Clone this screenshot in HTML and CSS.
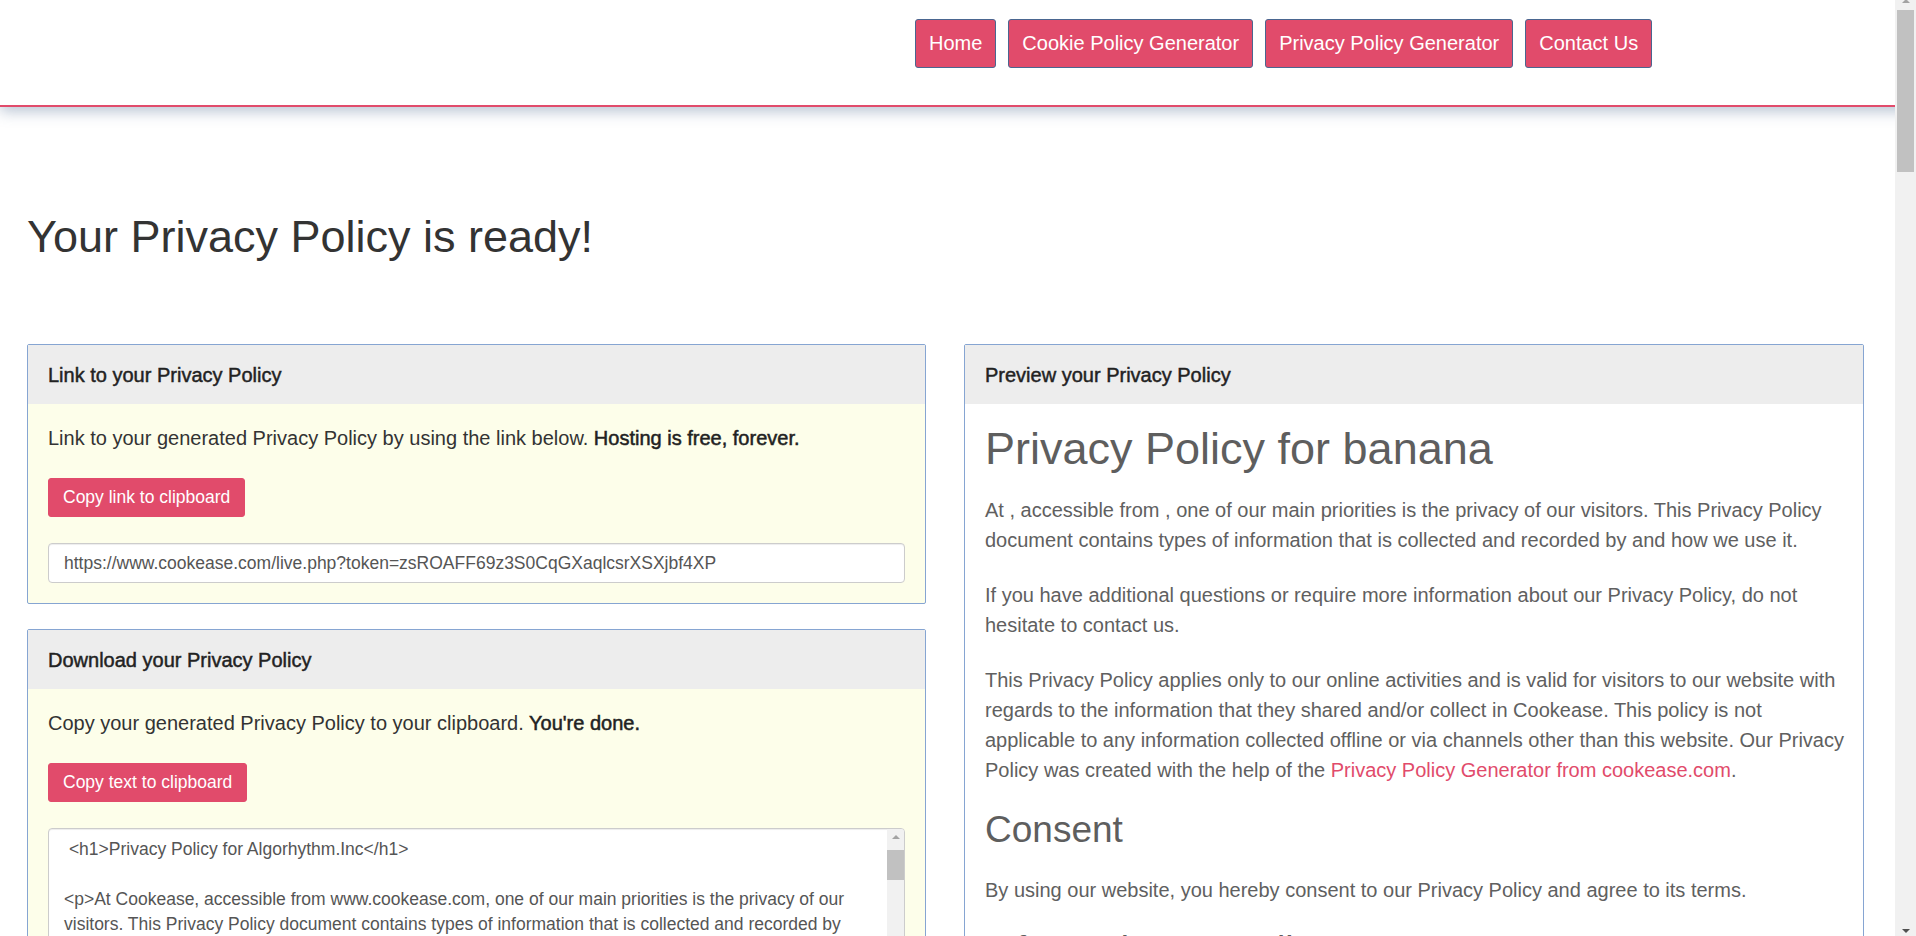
FILE: index.html
```html
<!DOCTYPE html>
<html lang="en">
<head>
<meta charset="utf-8">
<title>Your Privacy Policy is ready! - Cookease</title>
<link rel="stylesheet" href="styles.css">
</head>
<body>
<header class="topbar">
  <nav class="nav">
    <a class="nav-btn" href="#">Home</a>
    <a class="nav-btn" href="#">Cookie Policy Generator</a>
    <a class="nav-btn" href="#">Privacy Policy Generator</a>
    <a class="nav-btn" href="#">Contact Us</a>
  </nav>
</header>

<main class="page">
  <h1 class="page-title">Your Privacy Policy is ready!</h1>

  <div class="columns">
    <div class="col">
      <section class="panel">
        <div class="panel-heading">Link to your Privacy Policy</div>
        <div class="panel-body">
          <p class="lead">Link to your generated Privacy Policy by using the link below. <strong>Hosting is free, forever.</strong></p>
          <button class="btn" type="button">Copy link to clipboard</button>
          <input class="field" type="text" value="https://www.cookease.com/live.php?token=zsROAFF69z3S0CqGXaqlcsrXSXjbf4XP" readonly>
        </div>
      </section>

      <section class="panel">
        <div class="panel-heading">Download your Privacy Policy</div>
        <div class="panel-body">
          <p class="lead">Copy your generated Privacy Policy to your clipboard. <strong>You're done.</strong></p>
          <button class="btn" type="button">Copy text to clipboard</button>
          <div class="code-wrap">
            <textarea class="field code" readonly> &lt;h1&gt;Privacy Policy for Algorhythm.Inc&lt;/h1&gt;

&lt;p&gt;At Cookease, accessible from www.cookease.com, one of our main priorities is the privacy of our visitors. This Privacy Policy document contains types of information that is collected and recorded by Cookease and how we use it.&lt;/p&gt;

&lt;p&gt;If you have additional questions or require more information about our Privacy Policy, do not hesitate to contact us.&lt;/p&gt;

&lt;p&gt;This Privacy Policy applies only to our online activities and is valid for visitors to our website with regards to the information that they shared and/or collect in Cookease. This policy is not applicable to any information collected offline or via channels other than this website.&lt;/p&gt;

&lt;h2&gt;Consent&lt;/h2&gt;

&lt;p&gt;By using our website, you hereby consent to our Privacy Policy and agree to its terms.&lt;/p&gt;</textarea>
            <div class="fake-scroll code-scroll" aria-hidden="true">
              <span class="arrow up"></span>
              <span class="thumb"></span>
            </div>
          </div>
        </div>
      </section>
    </div>

    <div class="col">
      <section class="panel">
        <div class="panel-heading">Preview your Privacy Policy</div>
        <div class="panel-body preview">
          <h1>Privacy Policy for banana</h1>
          <p>At , accessible from , one of our main priorities is the privacy of our visitors. This Privacy Policy document contains types of information that is collected and recorded by and how we use it.</p>
          <p>If you have additional questions or require more information about our Privacy Policy, do not hesitate to contact us.</p>
          <p>This Privacy Policy applies only to our online activities and is valid for visitors to our website with regards to the information that they shared and/or collect in Cookease. This policy is not applicable to any information collected offline or via channels other than this website. Our Privacy Policy was created with the help of the <a href="#">Privacy Policy Generator from cookease.com</a>.</p>
          <h2>Consent</h2>
          <p>By using our website, you hereby consent to our Privacy Policy and agree to its terms.</p>
          <h2>Information we collect</h2>
          <p>The personal information that you are asked to provide, and the reasons why you are asked to provide it, will be made clear to you at the point we ask you to provide your personal information.</p>
        </div>
      </section>
    </div>
  </div>
</main>

<div class="fake-scroll page-scroll" aria-hidden="true">
  <span class="arrow up"></span>
  <span class="thumb"></span>
  <span class="arrow down"></span>
</div>
</body>
</html>
```

FILE: styles.css
```css
html, body {
  margin: 0;
  padding: 0;
}

body {
  font-family: "Liberation Sans", Arial, Helvetica, sans-serif;
  color: #333;
  background: #fff;
}

.topbar {
  height: 105px;
  background: #fff;
  border-bottom: 2px solid #e14b6b;
  box-shadow: 0 4px 14px rgba(70, 100, 140, 0.4);
  position: relative;
  z-index: 1;
}

.nav {
  display: flex;
  gap: 12px;
  padding: 19px 0 0 915px;
}

.nav-btn {
  display: block;
  padding: 10px 13px;
  font-size: 20px;
  line-height: 27px;
  color: #fff;
  text-decoration: none;
  background: #e14b6b;
  border: 1px solid #4a6690;
  border-radius: 3px;
  white-space: nowrap;
}

.page {
  padding: 0 0 40px 27px;
}

.page-title {
  margin: 0;
  padding: 105px 0 82px;
  font-size: 45px;
  line-height: 49.5px;
  font-weight: normal;
  color: #333;
}

.columns {
  display: grid;
  grid-template-columns: 899px 900px;
  column-gap: 38px;
  align-items: start;
}

.col {
  display: flex;
  flex-direction: column;
  gap: 25px;
}

.panel {
  border: 1px solid #86a5d2;
  border-radius: 2px;
  background: #fdfeea;
}

.panel-heading {
  background: #ededed;
  padding: 16px 20px 15px;
  font-size: 20px;
  line-height: 28px;
  color: #222;
  -webkit-text-stroke: 0.45px #222;
}

.panel-body {
  padding: 20px;
}

.lead {
  margin: 0 0 26px;
  font-size: 20px;
  line-height: 28px;
  color: #333;
}

.lead strong {
  font-weight: normal;
  color: #222;
  -webkit-text-stroke: 0.5px #222;
}

.btn {
  display: block;
  margin: 0 0 26px;
  padding: 6px 14px;
  font-family: inherit;
  font-size: 17.5px;
  line-height: 25px;
  color: #fff;
  background: #e14b6b;
  border: 1px solid #e14b6b;
  border-radius: 3px;
  cursor: pointer;
}

.field {
  display: block;
  box-sizing: border-box;
  width: 100%;
  margin: 0;
  padding: 7px 15px;
  font-family: inherit;
  font-size: 17.5px;
  line-height: 24px;
  color: #555;
  background: #fff;
  border: 1px solid #ccc;
  border-radius: 4px;
  box-shadow: inset 0 1px 1px rgba(0, 0, 0, 0.075);
}

.code-wrap {
  position: relative;
}

.code {
  height: 420px;
  padding: 8px 32px 8px 15px;
  line-height: 25px;
  resize: none;
  overflow: hidden;
}

/* drawn scrollbars (the native ones are hidden when photographed) */
.fake-scroll {
  position: absolute;
  background: #f1f1f1;
}

.fake-scroll .thumb {
  position: absolute;
  background: #c1c1c1;
}

.fake-scroll .arrow {
  position: absolute;
  left: 50%;
  width: 0;
  height: 0;
  border-left: 4px solid transparent;
  border-right: 4px solid transparent;
  transform: translateX(-50%);
}

.fake-scroll .arrow.up {
  border-bottom: 4px solid #a3a3a3;
}

.fake-scroll .arrow.down {
  border-top: 4px solid #505050;
}

.code-scroll {
  top: 1px;
  right: 1px;
  width: 17px;
  height: 418px;
  border-radius: 0 3px 3px 0;
}

.code-scroll .arrow.up {
  top: 6px;
}

.code-scroll .thumb {
  top: 21px;
  left: 0;
  width: 17px;
  height: 30px;
}

.page-scroll {
  position: fixed;
  top: 0;
  right: 0;
  width: 21px;
  height: 100vh;
  z-index: 5;
}

.page-scroll .arrow.up {
  top: -1px;
}

.page-scroll .thumb {
  top: 10px;
  left: 2px;
  width: 17px;
  height: 162px;
}

.page-scroll .arrow.down {
  bottom: 3px;
}

.preview {
  background: #fff;
  color: #606060;
  padding-right: 16px;
}

.preview h1 {
  margin: 0 0 22px;
  font-size: 45px;
  line-height: 49.5px;
  font-weight: normal;
  color: #5e5e5e;
}

.preview h2 {
  margin: 0 0 24px;
  font-size: 37px;
  line-height: 40.7px;
  font-weight: normal;
  color: #5e5e5e;
}

.preview p {
  margin: 0 0 25px;
  font-size: 20px;
  line-height: 30px;
}

.preview a {
  color: #e14b6b;
  text-decoration: none;
}
```
